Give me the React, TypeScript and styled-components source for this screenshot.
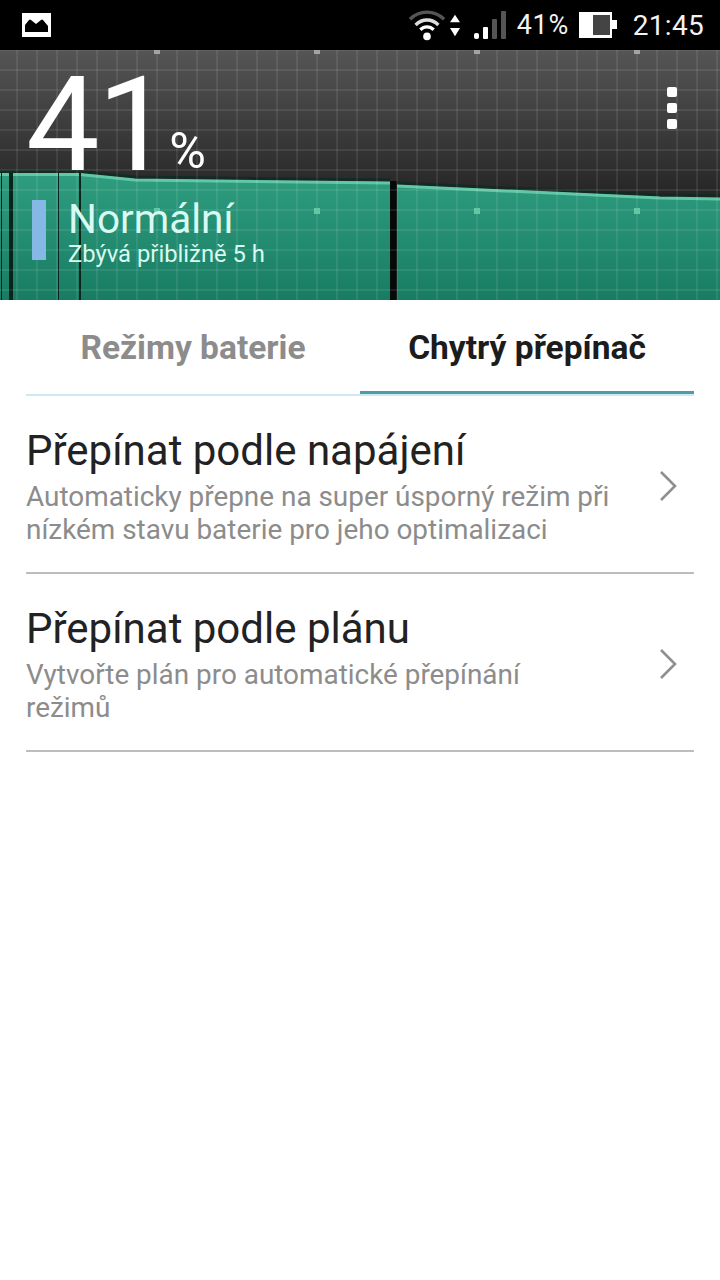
import React from "react";
import styled, { createGlobalStyle } from "styled-components";

const GlobalStyle = createGlobalStyle`
  html, body {
    margin: 0;
    padding: 0;
    background: #fff;
    font-family: Roboto, "Noto Sans", sans-serif;
  }
  * { box-sizing: border-box; }
`;

const Screen = styled.div`
  width: 720px;
  height: 1280px;
  background: #fff;
  overflow: hidden;
`;

const StatusBar = styled.div`
  height: 50px;
  background: #000;
  display: flex;
  align-items: center;
  padding: 0 16px 0 22px;
  color: #f2f2f2;
  font-size: 27px;
`;

const StatusLeft = styled.div`
  flex: 1;
  display: flex;
  align-items: center;
`;

const StatusPercent = styled.span`
  margin-left: 11px;
  letter-spacing: 0.6px;
`;

const StatusBattery = styled.svg`
  margin-left: 10px;
`;

const StatusTime = styled.span`
  margin-left: 16px;
  font-size: 28px;
  letter-spacing: 0.3px;
`;

const WifiIcon = styled.svg`
  margin-right: 4px;
`;

const SignalIcon = styled.svg`
  margin-left: 14px;
`;

const Hero = styled.div`
  position: relative;
  height: 250px;
  background: linear-gradient(#555 0%, #242424 60%, #242424 100%);
`;

const HeroGraph = styled.svg`
  position: absolute;
  inset: 0;
`;

const HeroGrid = styled.div`
  position: absolute;
  inset: 0;
  background-image:
    linear-gradient(to right, rgba(255, 255, 255, 0.08) 2px, transparent 2px),
    linear-gradient(to bottom, rgba(255, 255, 255, 0.08) 2px, transparent 2px);
  background-size: 20px 20px;
  background-position: 16px 19px;
`;

const Knob = styled.span<{ $x: number; $y: number; $green?: boolean }>`
  position: absolute;
  left: ${(p) => p.$x}px;
  top: ${(p) => p.$y}px;
  width: 6px;
  height: ${(p) => (p.$green ? 6 : 4)}px;
  background: ${(p) => (p.$green ? "#62c7a6" : "#a3a3a3")};
`;

const HeroContent = styled.div`
  position: relative;
  height: 100%;
  padding: 0 0 0 26px;
`;

const Level = styled.div`
  display: flex;
  align-items: flex-start;
  height: 145px;
  padding-top: 6px;
  color: #fff;
`;

const LevelNumber = styled.span`
  font-size: 131px;
  font-weight: 400;
  line-height: 139px;
  letter-spacing: -2px;
`;

const LevelUnit = styled.span`
  font-size: 50px;
  font-weight: 400;
  line-height: 60px;
  margin: 65px 0 0 0;
`;

const ModeRow = styled.div`
  display: flex;
  align-items: flex-start;
  padding-left: 6px;
`;

const ModeBar = styled.div`
  width: 14px;
  height: 60px;
  margin-top: 5px;
  background: #86b8e6;
  margin-right: 22px;
`;

const ModeText = styled.div`
  padding-top: 2px;
`;

const ModeName = styled.div`
  font-size: 40.5px;
  line-height: 44px;
  color: #d8faf2;
`;

const ModeHint = styled.div`
  font-size: 23.8px;
  line-height: 26px;
  color: #d8faf2;
`;

const MoreMenu = styled.div`
  position: absolute;
  top: 37px;
  right: 43px;
  display: flex;
  flex-direction: column;
  gap: 6px;
`;

const MoreDot = styled.span`
  width: 10px;
  height: 10px;
  border-radius: 2px;
  background: #fff;
`;

const Body = styled.div`
  padding: 0 26px;
`;

const Tabs = styled.div`
  display: flex;
  height: 96px;
  border-bottom: 2px solid #cdeaf0;
`;

const Tab = styled.div<{ $active?: boolean }>`
  width: 50%;
  display: flex;
  justify-content: center;
  padding-top: 28px;
  font-size: 33.5px;
  line-height: 40px;
  font-weight: 700;
  color: ${(p) => (p.$active ? "#1c1c1c" : "#8c8c8c")};
  border-bottom: 3px solid ${(p) => (p.$active ? "#4f9bab" : "transparent")};
`;

const Row = styled.div`
  height: 178px;
  display: flex;
  align-items: center;
  padding-top: 3px;
  border-bottom: 2px solid #bdbdbd;
`;

const RowText = styled.div`
  flex: 1;
`;

const RowTitle = styled.div`
  font-size: 42px;
  line-height: 50px;
  color: #222;
  margin-bottom: 4px;
`;

const RowHint = styled.div`
  font-size: 27.9px;
  line-height: 33px;
  color: #8c8c8c;
  width: 600px;
`;

const Chevron = styled.svg`
  margin-right: 16px;
  flex-shrink: 0;
`;

const RowChevron = () => (
  <Chevron width="20" height="34" viewBox="0 0 20 34">
    <path d="M3 3 L17 17 L3 31" fill="none" stroke="#8f8f8f" strokeWidth="2.6" />
  </Chevron>
);

const topKnobs = [154, 314, 474, 634];

const App: React.FC = () => (
  <Screen>
    <GlobalStyle />
    <StatusBar>
      <StatusLeft>
        <svg width="29" height="24" viewBox="0 0 29 24">
          <rect width="29" height="24" fill="#fff" />
          <path
            d="M3 19 V12 L7 7 Q8 6 9 7 L14 11 L19 7 Q20 6 21 7 L26 13 V19 Z"
            fill="#000"
          />
        </svg>
      </StatusLeft>
      <WifiIcon width="38" height="32" viewBox="0 0 40 32">
        <path d="M2 10 C12 0 28 0 38 10" fill="none" stroke="#555" strokeWidth="3.5" />
        <path d="M8 16 C15 9 25 9 32 16" fill="none" stroke="#ddd" strokeWidth="3.5" />
        <path d="M13 21 C17 17 23 17 27 21" fill="none" stroke="#fff" strokeWidth="3.5" />
        <circle cx="20" cy="28" r="4" fill="#fff" />
      </WifiIcon>
      <svg width="10" height="25" viewBox="0 0 12 26">
        <path d="M6 0 L12 9 H0 Z M0 16 H12 L6 26 Z" fill="#fff" />
      </svg>
      <SignalIcon width="32" height="28" viewBox="0 0 32 28">
        <rect x="0" y="22" width="5" height="6" rx="2" fill="#fff" />
        <rect x="9" y="16" width="5" height="12" rx="1" fill="#fff" />
        <rect x="18" y="8" width="5" height="20" rx="1" fill="#555" />
        <rect x="27" y="0" width="5" height="28" rx="1" fill="#555" />
      </SignalIcon>
      <StatusPercent>41%</StatusPercent>
      <StatusBattery width="38" height="26" viewBox="0 0 38 26">
        <rect width="33" height="26" fill="#fff" />
        <rect x="14" y="3" width="17" height="20" fill="#444" />
        <rect x="33" y="8" width="5" height="9" fill="#fff" />
      </StatusBattery>
      <StatusTime>21:45</StatusTime>
    </StatusBar>

    <Hero>
      <HeroGraph width="720" height="250" viewBox="0 0 720 250">
        <defs>
          <linearGradient id="fillGreen" x1="0" y1="0" x2="0" y2="1">
            <stop offset="0" stopColor="#2f9d7f" />
            <stop offset="1" stopColor="#187c63" />
          </linearGradient>
        </defs>
        <path
          d="M0 121.5 L80 121.5 L135 127 L390 130 M397 133 L660 145 L720 146"
          fill="none"
          stroke="#0c2a22"
          strokeWidth="3"
          opacity="0.7"
        />
        <path
          d="M0 123.5 L80 123.5 L135 129 L390 132 V250 H0 Z M397 135 L660 147 L720 148 V250 H397 Z"
          fill="url(#fillGreen)"
        />
        <path
          d="M0 124.5 L80 124.5 L135 130 L390 133 M397 136 L660 148 L720 149"
          fill="none"
          stroke="#62c7a6"
          strokeWidth="3"
        />
        <rect x="390" y="131" width="7" height="119" fill="#050a08" />
        <rect x="9" y="123" width="4" height="127" fill="#06241b" />
        <rect x="1" y="123" width="1" height="127" fill="#06241b" />
        <rect x="58" y="123" width="1" height="127" fill="#06241b" />
        <rect x="79" y="123" width="2" height="127" fill="#06241b" />
      </HeroGraph>
      <HeroGrid />
      {topKnobs.map((x) => (
        <Knob key={`top-${x}`} $x={x} $y={0} />
      ))}
      {topKnobs.map((x) => (
        <Knob key={`mid-${x}`} $x={x} $y={158} $green />
      ))}
      <HeroContent>
        <Level>
          <LevelNumber>41</LevelNumber>
          <LevelUnit>%</LevelUnit>
        </Level>
        <ModeRow>
          <ModeBar />
          <ModeText>
            <ModeName>Normální</ModeName>
            <ModeHint>Zbývá přibližně 5 h</ModeHint>
          </ModeText>
        </ModeRow>
      </HeroContent>
      <MoreMenu>
        <MoreDot />
        <MoreDot />
        <MoreDot />
      </MoreMenu>
    </Hero>

    <Body>
      <Tabs>
        <Tab>Režimy baterie</Tab>
        <Tab $active>Chytrý přepínač</Tab>
      </Tabs>
      <Row>
        <RowText>
          <RowTitle>Přepínat podle napájení</RowTitle>
          <RowHint>
            Automaticky přepne na super úsporný režim při nízkém stavu baterie pro jeho optimalizaci
          </RowHint>
        </RowText>
        <RowChevron />
      </Row>
      <Row>
        <RowText>
          <RowTitle>Přepínat podle plánu</RowTitle>
          <RowHint>
            Vytvořte plán pro automatické přepínání
            <br />
            režimů
          </RowHint>
        </RowText>
        <RowChevron />
      </Row>
    </Body>
  </Screen>
);

export default App;
